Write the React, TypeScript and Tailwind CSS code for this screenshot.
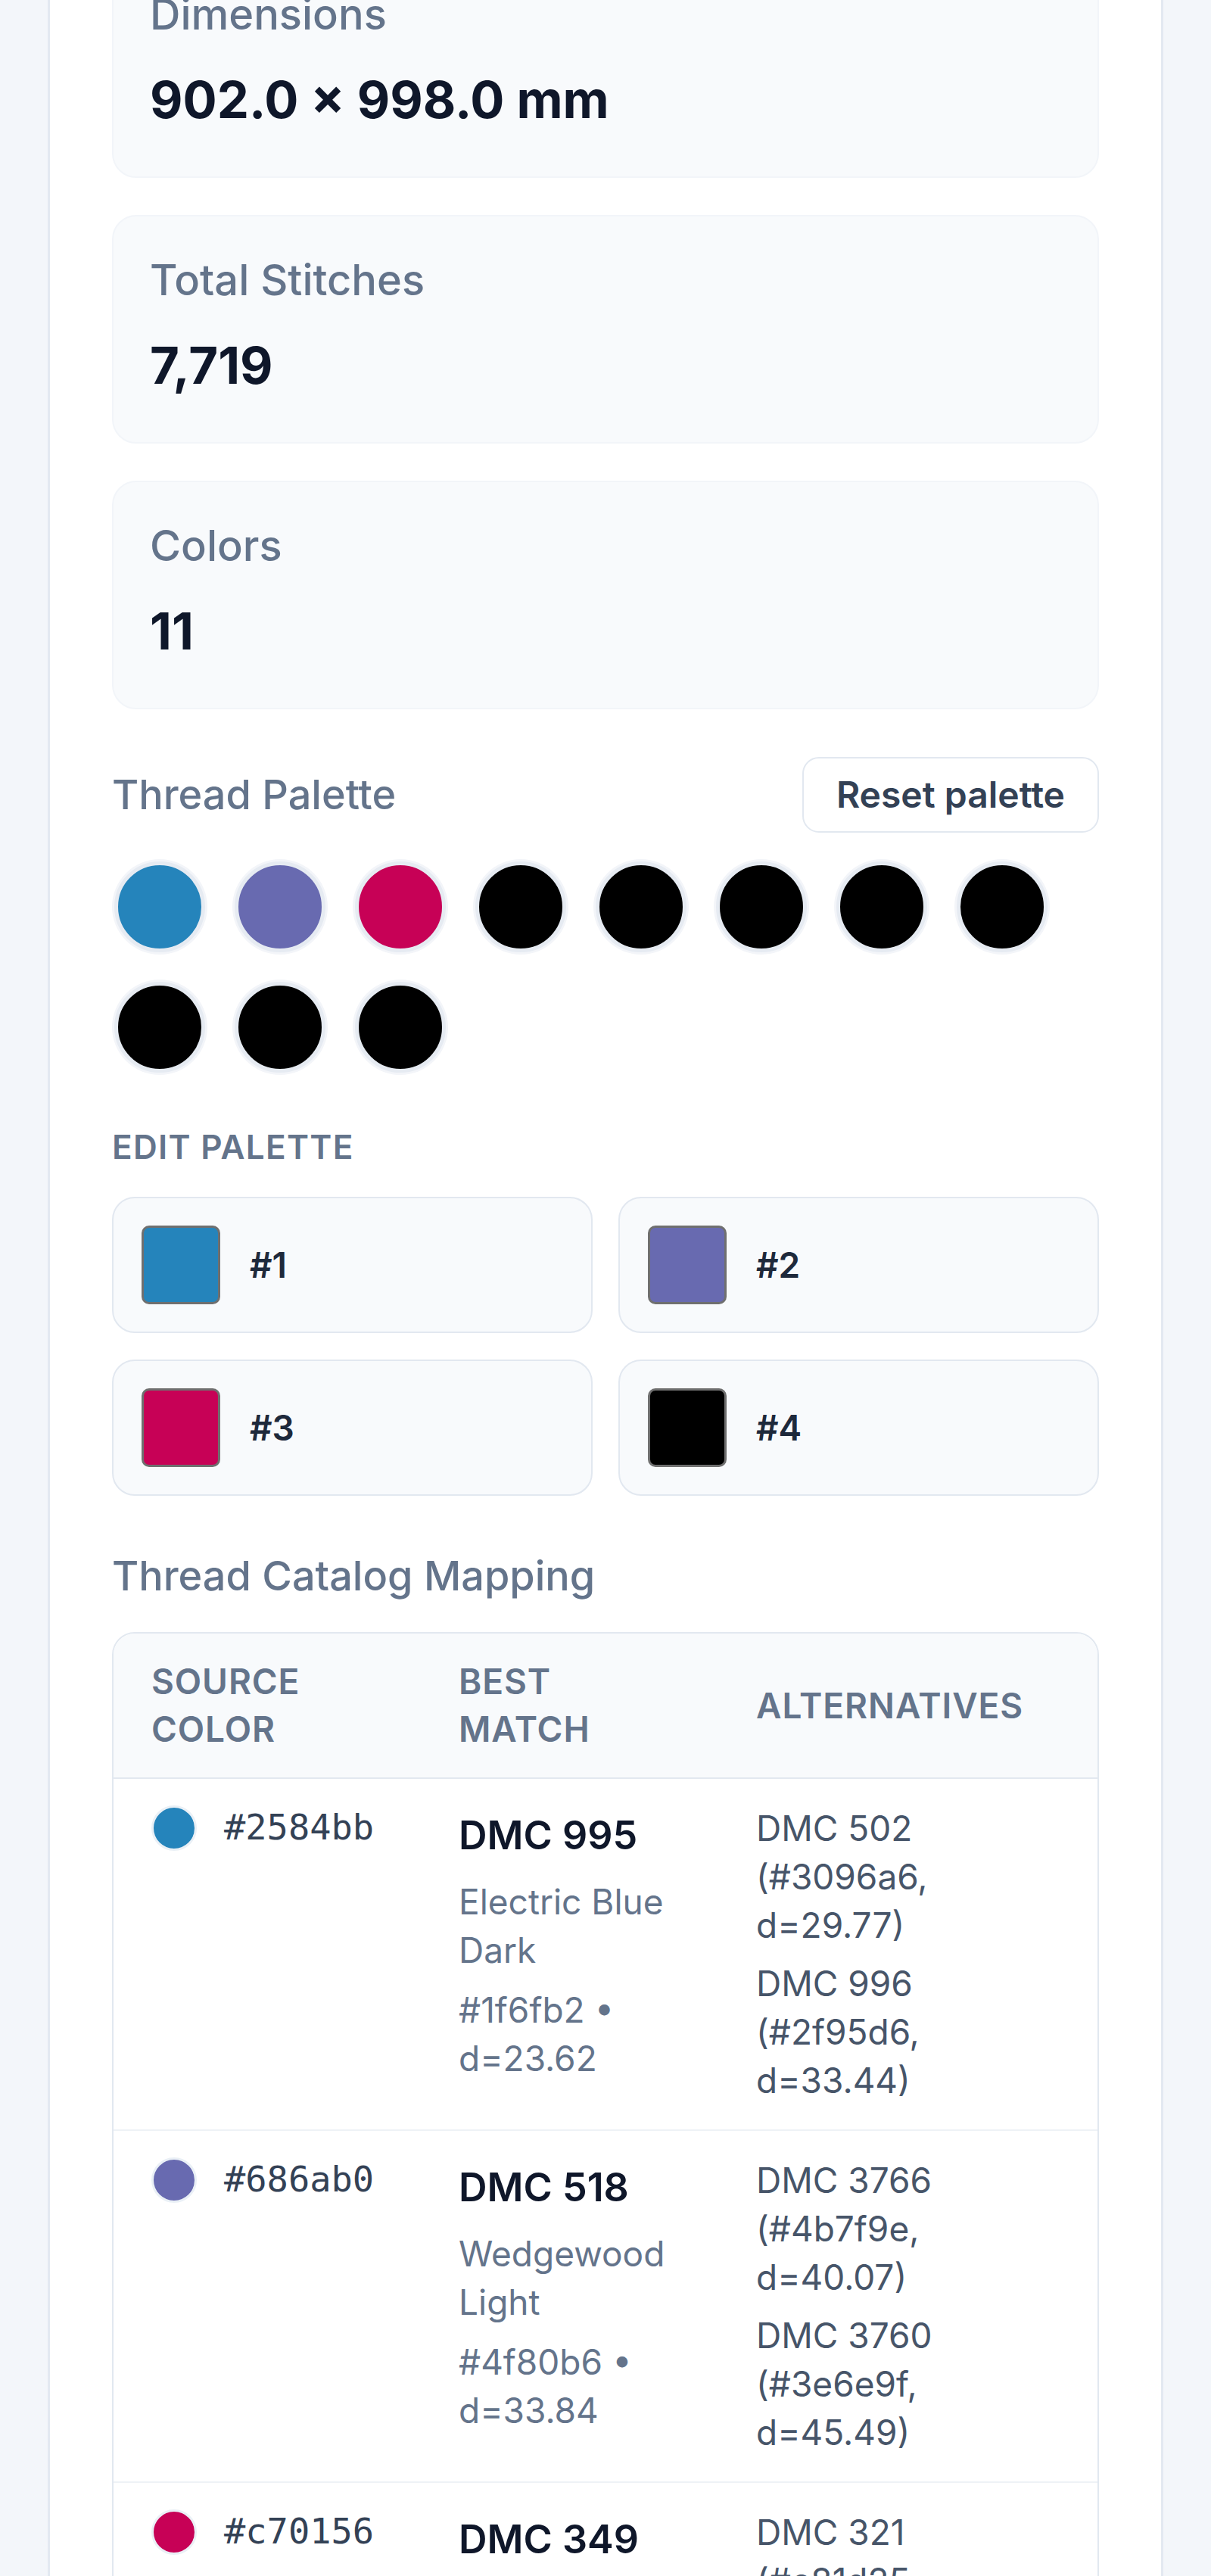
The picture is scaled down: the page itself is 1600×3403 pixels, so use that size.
import React from "react";

const stats = [
  { label: "Dimensions", value: "902.0 × 998.0 mm" },
  { label: "Total Stitches", value: "7,719" },
  { label: "Colors", value: "11" },
];

const palette = [
  "#2584bb",
  "#686ab0",
  "#c70156",
  "#000000",
  "#000000",
  "#000000",
  "#000000",
  "#000000",
  "#000000",
  "#000000",
  "#000000",
];

const rows = [
  {
    src: "#2584bb",
    name: "DMC 995",
    desc: "Electric Blue Dark",
    hex: "#1f6fb2 • d=23.62",
    alts: ["DMC 502 (#3096a6, d=29.77)", "DMC 996 (#2f95d6, d=33.44)"],
  },
  {
    src: "#686ab0",
    name: "DMC 518",
    desc: "Wedgewood Light",
    hex: "#4f80b6 • d=33.84",
    alts: ["DMC 3766 (#4b7f9e, d=40.07)", "DMC 3760 (#3e6e9f, d=45.49)"],
  },
  {
    src: "#c70156",
    name: "DMC 349",
    desc: "Coral Dark",
    hex: "#d2102b • d=24.10",
    alts: ["DMC 321 (#c81d25, d=26.31)", "DMC 817 (#bb051f, d=27.02)"],
  },
];

export default function App() {
  return (
    <div
      className="h-[3403px] overflow-hidden bg-[#f3f6fa] pl-[63px]"
      style={{ fontFamily: "Inter, 'Noto Sans', sans-serif" }}
    >
      <div className="-mt-[150px] w-[1474px] border-x-[3px] border-[#e3e9f1] bg-white px-[82px] pt-[83px] pb-[200px]">
        {/* Stat cards */}
        <div className="flex flex-col gap-[49px]">
          {stats.map((s) => (
            <div
              key={s.label}
              className="h-[302px] rounded-[32px] border-2 border-[#f2f5f9] bg-[#f8fafc] px-[48px] pt-[48px]"
            >
              <div className="text-[56px] font-medium leading-[72px] text-[#64748b]">
                {s.label}
              </div>
              <div className="mt-[35px] text-[67px] font-bold leading-[84px] text-[#0f172a]">
                {s.value}
              </div>
            </div>
          ))}
        </div>

        {/* Thread palette header */}
        <div className="mt-[63px] flex h-[100px] items-center justify-between">
          <div className="text-[54px] font-medium leading-[72px] text-[#64748b]">
            Thread Palette
          </div>
          <button className="h-[100px] rounded-[22px] border-2 border-[#e2e8f0] bg-white px-[43px] text-[48px] font-semibold text-[#334155]">
            Reset palette
          </button>
        </div>

        {/* Circles */}
        <div className="mt-[35px] flex flex-wrap gap-[39px] p-[3px]">
          {palette.map((c, i) => (
            <div
              key={i}
              className="h-[120px] w-[120px] rounded-full border-[5px] border-[#e6ebf2] shadow-[0_0_0_3px_#f3f5f9]"
              style={{ backgroundColor: c }}
            />
          ))}
        </div>

        {/* Edit palette */}
        <div className="mt-[63px] text-[44px] font-semibold uppercase leading-[64px] tracking-[0.03em] text-[#64748b]">
          Edit Palette
        </div>
        <div className="mt-[34px] grid grid-cols-2 gap-x-[34px] gap-y-[35px]">
          {palette.slice(0, 4).map((c, i) => (
            <div
              key={i}
              className="flex h-[180px] items-center gap-[39px] rounded-[30px] border-2 border-[#e2e8f0] bg-[#f8fafc] px-[37px]"
            >
              <div
                className="h-[104px] w-[104px] rounded-[10px] border-[3px] border-[#6f6f6f]"
                style={{ backgroundColor: c }}
              />
              <div className="text-[46px] font-semibold text-[#1e293b]">#{i + 1}</div>
            </div>
          ))}
        </div>

        {/* Thread catalog mapping */}
        <div className="mt-[70px] text-[54px] font-medium leading-[72px] text-[#64748b]">
          Thread Catalog Mapping
        </div>
        <div className="mt-[38px] overflow-hidden rounded-[30px] border-2 border-[#e2e8f0]">
          <table className="w-full table-fixed border-collapse text-left">
            <colgroup>
              <col className="w-[406px]" />
              <col className="w-[393px]" />
              <col />
            </colgroup>
            <thead>
              <tr className="border-b-2 border-[#e2e8f0] bg-[#f8fafc]">
                <th className="px-[50px] py-[32px] align-middle text-[46px] font-semibold uppercase leading-[63px] tracking-[0.02em] text-[#64748b]">
                  <div className="w-[240px]">Source Color</div>
                </th>
                <th className="px-[50px] py-[32px] align-middle text-[46px] font-semibold uppercase leading-[63px] tracking-[0.02em] text-[#64748b]">
                  <div className="w-[240px]">Best Match</div>
                </th>
                <th className="px-[50px] py-[32px] align-middle text-[46px] font-semibold uppercase leading-[63px] tracking-[0.02em] text-[#64748b]">
                  Alternatives
                </th>
              </tr>
            </thead>
            <tbody>
              {rows.map((r, i) => (
                <tr key={i} className={i > 0 ? "border-t-2 border-[#eef2f6]" : ""}>
                  <td className="px-[50px] py-[33px] align-top">
                    <div className="flex h-[63px] items-center gap-[36px]">
                      <div
                        className="h-[60px] w-[60px] shrink-0 rounded-full border-[3px] border-[#eaf0f6]"
                        style={{ backgroundColor: r.src }}
                      />
                      <span
                        className="text-[47px] text-[#334155]"
                        style={{ fontFamily: "'DejaVu Sans Mono', monospace" }}
                      >
                        {r.src}
                      </span>
                    </div>
                  </td>
                  <td className="px-[50px] py-[33px] align-top">
                    <div className="w-[300px]">
                      <div className="text-[52px] font-semibold leading-[84px] text-[#0f172a]">
                        {r.name}
                      </div>
                      <div className="mt-[13px] text-[46px] leading-[64px] text-[#64748b]">
                        {r.desc}
                      </div>
                      <div className="mt-[15px] text-[46px] leading-[64px] text-[#64748b]">
                        {r.hex}
                      </div>
                    </div>
                  </td>
                  <td className="px-[50px] py-[33px] align-top">
                    <div className="flex flex-col gap-[13px]">
                      {r.alts.map((a) => (
                        <div
                          key={a}
                          className="max-w-[330px] text-[46px] leading-[64px] text-[#475569]"
                        >
                          {a}
                        </div>
                      ))}
                    </div>
                  </td>
                </tr>
              ))}
            </tbody>
          </table>
        </div>
      </div>
    </div>
  );
}
